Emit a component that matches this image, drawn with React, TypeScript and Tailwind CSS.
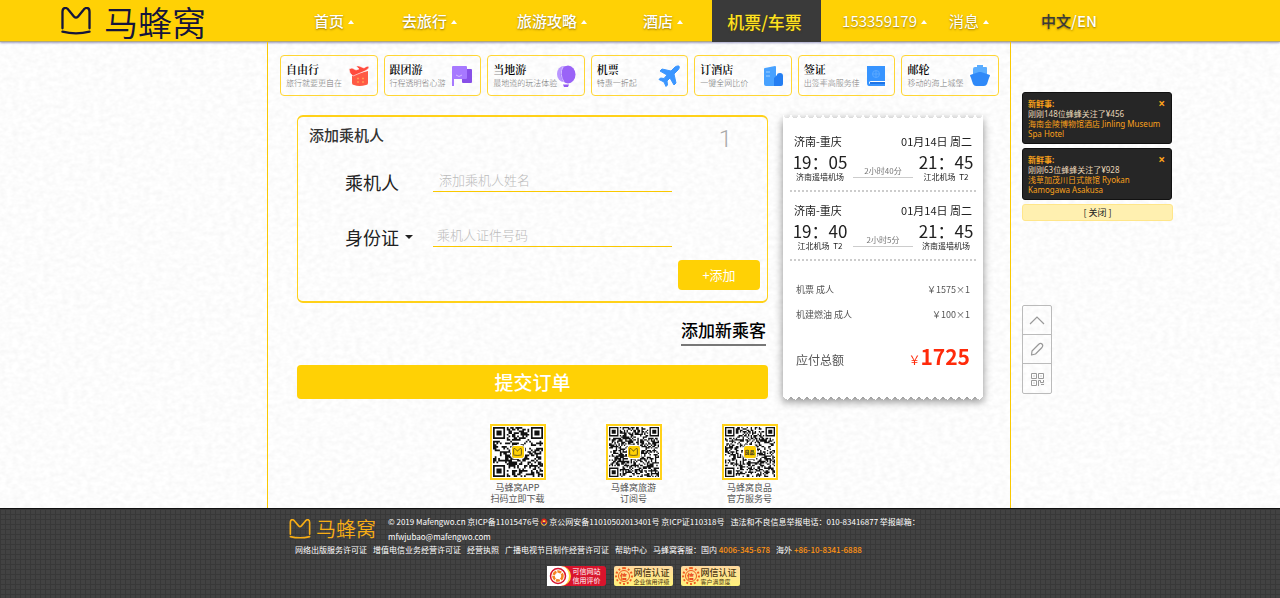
import { useState } from "react";
import type { ReactNode } from "react";

const NAV = [
  { label: "首页", className: "ml-[108px]" },
  { label: "去旅行", className: "ml-12" },
  { label: "旅游攻略", className: "ml-[60px]" },
  { label: "酒店", className: "ml-14" },
];

const CATEGORIES: { title: string; note: string; icon: ReactNode }[] = [
  { title: "自由行", note: "旅行就要更自在", icon: <TripIcon /> },
  { title: "跟团游", note: "行程透明省心游", icon: <FlagIcon /> },
  { title: "当地游", note: "最地道的玩法体验", icon: <BalloonIcon /> },
  { title: "机票", note: "特惠一折起", icon: <PlaneIcon /> },
  { title: "订酒店", note: "一键全网比价", icon: <HotelIcon /> },
  { title: "签证", note: "出签率高服务佳", icon: <VisaIcon /> },
  { title: "邮轮", note: "移动的海上城堡", icon: <ShipIcon /> },
];

const NEWS = [
  { id: 1, text: "刚刚148位蜂蜂关注了¥456", hotel: "海南金陵博物馆酒店 Jinling Museum Spa Hotel" },
  { id: 2, text: "刚刚63位蜂蜂关注了¥928", hotel: "浅草加茂川日式旅馆 Ryokan Kamogawa Asakusa" },
];

const QR_CODES = [
  { lines: ["马蜂窝APP", "扫码立即下载"], size: 29, seed: 7 },
  { lines: ["马蜂窝旅游", "订阅号"], size: 37, seed: 23 },
  { lines: ["马蜂窝良品", "官方服务号"], size: 37, seed: 91, mark: "良品" },
];

const LICENCES = ["网络出版服务许可证", "增值电信业务经营许可证", "经营执照", "广播电视节目制作经营许可证", "帮助中心"];

export default function App() {
  return (
    <div className="relative isolate flex min-h-screen flex-col bg-[#fbfbfb] font-['Noto_Sans_CJK_SC','Noto_Sans',sans-serif] text-[#222]">
      <PaperTexture />
      <Header />
      <main className="grid flex-1 grid-cols-[1fr_744px_1fr] pr-0.5">
        <div className="col-start-2 border-x border-[#fac800] pt-[13px] pr-[11px] pb-0.5 pl-3">
          <Categories />
          <div className="mt-[19px] flex items-start gap-[15px] pr-4 pl-[17px]">
            <PassengerForm />
            <Ticket />
          </div>
          <div className="mt-6 flex justify-center gap-15 pr-3">
            {QR_CODES.map((code) => (
              <figure key={code.seed} className="w-14">
                <QrCode size={code.size} seed={code.seed} mark={code.mark} />
                <figcaption className="mt-0.5 flex flex-col items-center text-[9px] leading-[11px] whitespace-nowrap text-[#555]">
                  {code.lines.map((line) => (
                    <span key={line}>{line}</span>
                  ))}
                </figcaption>
              </figure>
            ))}
          </div>
        </div>
        <Sidebar />
      </main>
      <Footer />
    </div>
  );
}

function PaperTexture() {
  return (
    <svg className="absolute inset-0 -z-10 size-full" aria-hidden="true">
      <filter id="paper" x="0" y="0" width="100%" height="100%">
        <feTurbulence type="fractalNoise" baseFrequency="0.16 0.22" numOctaves="2" seed="4" />
        <feColorMatrix values="0.13 0 0 0 0.91 0.13 0 0 0 0.91 0.13 0 0 0 0.91 0 0 0 0 1" />
      </filter>
      <rect width="100%" height="100%" filter="url(#paper)" />
    </svg>
  );
}

function CatMark({ className }: { className: string }) {
  return (
    <svg viewBox="0 0 32 29" className={className} fill="none" stroke="currentColor" strokeWidth="2.4" strokeLinecap="round" aria-hidden="true">
      <path d="M2 22V5Q2 1 5 1 7 1 9 4L14 10Q16 12 18 10L23 4Q25 1 27 1 30 1 30 5V22" />
      <path d="M2 25.500Q16 29 30 25.500" />
    </svg>
  );
}

function Caret() {
  return (
    <svg viewBox="0 0 6 4" className="h-1 w-1.5 fill-white" aria-hidden="true">
      <path d="M3 0 6 4H0Z" />
    </svg>
  );
}

function Header() {
  return (
    <header className="flex h-[42px] items-center border-b border-[#b4a970] bg-[#ffd105] whitespace-nowrap shadow-[0_1px_2px_rgba(60,60,140,0.5)]">
      <a href="#" aria-label="马蜂窝" className="ml-15 flex items-center gap-3 text-[#14143c]">
        <CatMark className="h-7 w-8" />
        <span className="pt-0.5 text-[34px] leading-10 font-[350]">马蜂窝</span>
      </a>
      <nav className="flex items-center text-[15px] font-medium text-white [text-shadow:0_1px_2px_rgba(80,60,0,0.6)]">
        {NAV.map((item) => (
          <a key={item.label} href="#" className={"flex items-center gap-1 pt-0.5 " + item.className}>
            {item.label}
            <Caret />
          </a>
        ))}
        <a href="#" className="ml-[29px] flex h-[42px] w-[109px] items-center justify-center bg-[#3a3a3a] pt-0.5 pr-1 text-[17px] text-[#ffe21f]">
          机票/车票
        </a>
        <a href="#" className="ml-[21px] flex items-center gap-1 pt-0.5 font-normal">
          153359179
          <Caret />
        </a>
        <a href="#" className="ml-[22px] flex items-center gap-1 pt-0.5 font-normal">
          消息
          <Caret />
        </a>
        <a href="#" className="ml-[52px] pt-0.5">
          <span className="text-[#3a3a3a]">中文</span>/EN
        </a>
      </nav>
    </header>
  );
}

function Categories() {
  return (
    <nav className="grid grid-cols-7 gap-1.5">
      {CATEGORIES.map((item) => (
        <a
          key={item.title}
          href="#"
          className="flex h-[41px] items-center justify-between rounded border border-[#ffd633] pr-[7px] pl-[5px] whitespace-nowrap"
        >
          <span className="flex w-0 flex-1 flex-col">
            <span className="font-['Noto_Serif_CJK_SC','Noto_Sans_CJK_SC',serif] text-[11px] leading-[14px] font-semibold text-black">{item.title}</span>
            <span className="text-[8px] leading-[14px] font-light text-[#777]">{item.note}</span>
          </span>
          {item.icon}
        </a>
      ))}
    </nav>
  );
}

function PassengerForm() {
  return (
    <form className="min-w-0 flex-1" onSubmit={(e) => e.preventDefault()}>
      <fieldset className="h-[188px] rounded-md border-2 border-x border-[#ffd119] pr-[7px] pl-[11px]">
        <div className="flex h-[55px] items-start justify-between pt-1.5 pr-7">
          <h2 className="text-[15px] leading-6 font-medium text-[#333]">添加乘机人</h2>
          <span className="font-['Roboto',sans-serif] text-2xl leading-8 font-light text-[#aaa]">1</span>
        </div>
        <div className="flex items-center pl-9">
          <label htmlFor="name" className="w-[88px] text-lg leading-5">
            乘机人
          </label>
          <input
            id="name"
            placeholder="添加乘机人姓名"
            className="h-5 w-[239px] border-b border-[#fac800] bg-transparent px-1.5 pb-1 text-[13px] leading-4 outline-none placeholder:font-light placeholder:text-[#bbb]"
          />
        </div>
        <div className="mt-[35px] flex items-center pl-9">
          <div className="flex w-[88px] items-center">
            <select aria-label="证件类型" className="w-[60px] appearance-none bg-transparent text-lg leading-5 outline-none">
              <option>身份证</option>
              <option>护照</option>
            </select>
            <svg viewBox="0 0 8 4" className="h-1 w-2 fill-[#222]" aria-hidden="true">
              <path d="M0 0H8L4 4Z" />
            </svg>
          </div>
          <input
            aria-label="证件号码"
            placeholder="乘机人证件号码"
            className="h-5 w-[239px] border-b border-[#fac800] bg-transparent px-1 pb-1 text-[13px] leading-4 outline-none placeholder:font-light placeholder:text-[#bbb]"
          />
        </div>
        <div className="mt-[13px] flex justify-end">
          <button type="button" className="h-[30px] w-[82px] rounded bg-[#ffd105] text-[13px] text-white">
            +添加
          </button>
        </div>
      </fieldset>
      <div className="mt-[13px] flex justify-end pr-0.5">
        <a href="#" className="border-b-2 border-[#777] text-[17px] leading-7 font-medium text-black">
          添加新乘客
        </a>
      </div>
      <button type="submit" className="mt-[19px] h-[34px] w-full rounded bg-[#ffd105] text-[19px] font-medium text-white">
        提交订单
      </button>
    </form>
  );
}

interface FlightProps {
  depart: string;
  from: string;
  arrive: string;
  to: string;
  duration: string;
}

function Flight({ depart, from, arrive, to, duration }: FlightProps) {
  return (
    <section className="border-b-2 border-dotted border-[#ccc] pb-2">
      <div className="flex justify-between px-1 text-[11px] leading-5">
        <h3>济南-重庆</h3>
        <span>01月14日 周二</span>
      </div>
      <div className="flex items-end justify-between px-0.5 pt-px text-center">
        <div className="w-14">
          <p className="text-[17px] leading-5 whitespace-nowrap">{depart}</p>
          <p className="text-[8px] leading-[10px] whitespace-pre">{from}</p>
        </div>
        <p className="mb-1 w-15 border-b border-[#ccc] text-[8px] leading-3 text-[#777]">{duration}</p>
        <div className="w-14">
          <p className="text-[17px] leading-5 whitespace-nowrap">{arrive}</p>
          <p className="text-[8px] leading-[10px] whitespace-pre">{to}</p>
        </div>
      </div>
    </section>
  );
}

function Ticket() {
  return (
    <aside className="w-[200px] shrink-0 drop-shadow-[0_3px_4px_rgba(0,0,0,0.45)]">
      <div className="h-1 bg-[radial-gradient(circle_at_4px_0,transparent_3px,white_3px)] bg-size-[8px_4px]" />
      <div className="bg-white px-[7px] pt-3">
        <Flight depart="19：05" from="济南遥墙机场" arrive="21：45" to="江北机场  T2" duration="2小时40分" />
        <div className="pt-2">
          <Flight depart="19：40" from="江北机场  T2" arrive="21：45" to="济南遥墙机场" duration="2小时5分" />
        </div>
        <dl className="flex flex-col gap-[9px] px-1.5 pt-[21px] pb-5 text-[#555]">
          <div className="flex justify-between text-[9px] leading-4">
            <dt>机票 成人</dt>
            <dd>￥1575×1</dd>
          </div>
          <div className="flex justify-between text-[9px] leading-4">
            <dt>机建燃油 成人</dt>
            <dd>￥100×1</dd>
          </div>
          <div className="mt-2 flex items-baseline justify-between text-xs leading-8">
            <dt>应付总额</dt>
            <dd className="text-[#ff2a0a]">
              ￥<strong className="text-[21px] font-bold">1725</strong>
            </dd>
          </div>
        </dl>
      </div>
      <div className="h-1 bg-[conic-gradient(from_135deg_at_50%_0%,transparent_90deg,white_0)] bg-size-[8px_4px] bg-position-[4px_0]" />
    </aside>
  );
}

function Sidebar() {
  const [news, setNews] = useState(NEWS);

  return (
    <aside className="ml-[11px] w-[151px] pt-[50px]">
      <div className="flex flex-col gap-1">
        {news.map((item) => (
          <article
            key={item.id}
            className="h-[52px] w-[150px] rounded-[3px] border border-[#111] bg-[#262626] px-[5px] pt-1.5 font-['Noto_Sans','Noto_Sans_CJK_SC',sans-serif] text-[8px] leading-[10px] text-[#e6d5b8]"
          >
            <div className="flex justify-between font-bold text-[#f9a11b]">
              <h3>新鲜事:</h3>
              <button aria-label="移除" className="px-px text-xs leading-[10px]" onClick={() => setNews(news.filter((n) => n.id !== item.id))}>
                ×
              </button>
            </div>
            <p>{item.text}</p>
            <a href="#" className="block text-[#f9a11b]">
              {item.hotel}
            </a>
          </article>
        ))}
        <button className="h-[17px] rounded-[3px] border border-[#ffe68a] bg-[#fff0b0] text-[9px] leading-3" onClick={() => setNews([])}>
          [ 关闭 ]
        </button>
      </div>
      <div className="mt-21 flex w-[30px] flex-col divide-y divide-[#bbb] rounded-xs border border-[#bbb] text-[#999]">
        <button aria-label="返回顶部" className="flex h-[29px] items-center justify-center">
          <svg viewBox="0 0 16 16" className="size-4" fill="none" stroke="currentColor" strokeWidth="1.2">
            <path d="m1 12 7-7 7 7" />
          </svg>
        </button>
        <button aria-label="反馈" className="flex h-[29px] items-center justify-center">
          <svg viewBox="0 0 16 16" className="size-4" fill="none" stroke="currentColor" strokeWidth="1.2" strokeLinejoin="round">
            <path d="M3 10 9.500 3.500Q11.500 1.500 13 3T13 6.500L6.500 13 2.500 14Z" />
          </svg>
        </button>
        <button aria-label="二维码" className="flex h-[29px] items-center justify-center">
          <svg viewBox="0 0 16 16" className="size-4" fill="none" stroke="currentColor">
            <path d="M2.500 2.500h5v5h-5zM9.500 2.500h5v5h-5zM2.500 9.500h5v5h-5zM4.500 5h1M11.500 5h1M4.500 12h1M9.500 15V9.500h2v2h3V9M12 13.500h3" />
          </svg>
        </button>
      </div>
    </aside>
  );
}

// finder squares in three corners, a pseudo random field elsewhere
function qrPath(size: number, seed: number) {
  let state = seed;
  let d = "";
  for (let y = 0; y < size; y++) {
    for (let x = 0; x < size; x++) {
      state = (state * 1103515245 + 12345) % 2147483648;
      const left = x < 8;
      const right = x >= size - 8;
      const top = y < 8;
      const bottom = y >= size - 8;
      let dark = state / 2147483648 < 0.5;
      if ((left && (top || bottom)) || (right && top)) {
        const fx = Math.abs((left ? x : x - size + 7) - 3);
        const fy = Math.abs((top ? y : y - size + 7) - 3);
        const ring = Math.max(fx, fy);
        dark = ring === 3 || ring < 2;
      }
      if (dark) d += "M" + x + " " + y + "h1v1h-1z";
    }
  }
  return d;
}

function QrCode({ size, seed, mark }: { size: number; seed: number; mark?: string }) {
  return (
    <div className="relative size-14 border-2 border-[#ffd119] bg-white p-px">
      <svg viewBox={"0 0 " + size + " " + size} className="size-full fill-[#111]" aria-hidden="true">
        <path d={qrPath(size, seed)} />
      </svg>
      <span className="absolute inset-0 m-auto flex size-3 items-center justify-center rounded-xs bg-[#ffd105] text-[5px] font-bold text-[#222] outline outline-white">
        {mark ?? <CatMark className="h-2 w-[9px]" />}
      </span>
    </div>
  );
}

function Footer() {
  return (
    <footer className="flex flex-col items-center border-t border-[#111] bg-[#424242] bg-[linear-gradient(#383838_1px,transparent_1px),linear-gradient(90deg,#383838_1px,transparent_1px)] bg-size-[5px_5px] pt-[5px] pb-3 text-[8px] leading-[15px] whitespace-nowrap text-white">
      <div className="w-[704px]">
        <div className="flex gap-3">
          <a href="#" aria-label="马蜂窝" className="flex items-center gap-1 text-[#f7ad15]">
            <CatMark className="h-5 w-6" />
            <span className="text-xl leading-[30px] font-[350]">马蜂窝</span>
          </a>
          <div>
            <p className="flex items-center">
              © 2019 Mafengwo.cn 京ICP备11015476号
              <PoliceBadge />
              京公网安备11010502013401号 京ICP证110318号
              <span className="ml-1.5">违法和不良信息举报电话：010-83416877 举报邮箱：</span>
            </p>
            <a href="mailto:mfwjubao@mafengwo.com">mfwjubao@mafengwo.com</a>
          </div>
        </div>
        <div className="flex gap-1.5 pl-[7px] leading-3">
          {LICENCES.map((name) => (
            <a key={name} href="#">
              {name}
            </a>
          ))}
          <span>
            马蜂窝客服：国内 <b className="font-medium text-[#ff9213]">4006-345-678</b>
          </span>
          <span>
            海外 <b className="font-medium text-[#ff9213]">+86-10-8341-6888</b>
          </span>
        </div>
      </div>
      <div className="mt-[9px] flex gap-2 pt-px pl-1.5">
        <a href="#" className="flex h-5 w-[59px] items-center rounded-[3px] bg-[#d9142c]">
          <span className="flex h-5 w-6 items-center justify-center rounded-l-[3px] rounded-r-full border-r-2 border-[#ffd940] bg-white">
            <svg viewBox="0 0 18 18" className="size-[18px]" fill="none" aria-hidden="true">
              <circle cx="9" cy="9" r="7.500" stroke="#d9142c" strokeWidth="1.500" />
              <circle cx="9" cy="9" r="4.500" stroke="#f58220" strokeWidth="2.600" strokeDasharray="4 1" />
            </svg>
          </span>
          <span className="flex flex-col pl-0.5 text-[7px] leading-[9px]">
            <span>可信网站</span>
            <span>信用评价</span>
          </span>
        </a>
        <TrustBadge note="企业信用评级" />
        <TrustBadge note="客户满意度" />
      </div>
    </footer>
  );
}

function TrustBadge({ note }: { note: string }) {
  return (
    <a href="#" className="flex h-5 w-[59px] items-center gap-px rounded-xs bg-[linear-gradient(#ffd9a0,#fff27a)] pl-px text-[#4a3510]">
      <span className="flex size-[18px] shrink-0 items-center justify-center rounded-full border-2 border-dotted border-[#f05a1e]">
        <span className="flex size-3 items-center justify-center rounded-full border border-[#f05a1e] text-[7px] leading-none font-bold text-[#e8380d]">信</span>
      </span>
      <span className="flex flex-col">
        <span className="text-[9px] leading-[11px] font-medium">网信认证</span>
        <span className="text-[6px] leading-[7px]">{note}</span>
      </span>
    </a>
  );
}

function PoliceBadge() {
  return (
    <svg viewBox="0 0 10 10" className="mx-px size-2" aria-hidden="true">
      <path d="M1 4Q0 8 5 10 10 8 9 4Z" fill="#e8b23a" />
      <circle cx="5" cy="4" r="3.500" fill="#d8261c" />
      <path d="M2.500 6h5L5 9Z" fill="#2b3a8c" />
      <path d="M3.500 3h3v2h-3z" fill="#ffd940" />
    </svg>
  );
}

function TripIcon() {
  return (
    <svg viewBox="0 0 22 22" className="size-[22px]" aria-hidden="true">
      <path d="M4 10 20 6V18Q20 20 18 20 11 22 6 20 4 20 4 18Z" fill="#ff5a45" />
      <path d="M1 4 4 3 8 5 11 4 8 1 11 1 16 3Q20 0 21 2 21 4 17 6L5 11 2 8Z" fill="#ff4a3c" stroke="#fbfbfb" strokeWidth=".6" />
      <path d="M9 13.500h2M14 13.500h2M9 17h2M14 17h2" stroke="#ff9a55" strokeWidth="1.500" fill="none" />
    </svg>
  );
}

function FlagIcon() {
  return (
    <svg viewBox="0 0 22 22" className="size-[22px]" aria-hidden="true">
      <path d="M11 4h9q1 0 1 1v12q0 1-1 1h-8q-1 0-1-1Z" fill="#8850e8" />
      <path d="M1 2q0-1 1-1h13q1 0 1 1v11q0 1-1 1H3v7H1Z" fill="#a779ff" />
      <path d="M5 10q3 3 6 0" stroke="#d5baff" fill="none" />
    </svg>
  );
}

function BalloonIcon() {
  return (
    <svg viewBox="0 0 22 22" className="size-[22px]" aria-hidden="true">
      <ellipse cx="9" cy="9" rx="7" ry="8" fill="#b995ff" />
      <ellipse cx="13" cy="9.500" rx="7.500" ry="9" fill="#9a63f7" />
      <path d="M8 1.500q-4 8 1 15.500" stroke="#d5c0ff" fill="none" />
      <path d="M8 19.500h6l-1 2.500H9Z" fill="#935bf2" />
    </svg>
  );
}

function PlaneIcon() {
  return (
    <svg viewBox="0 0 22 22" className="size-[22px]" aria-hidden="true">
      <path
        d="M13 6 17 2Q19 .5 21 1 22 3 20 5L16 9 18 18 16 20 12 13 9 16 9.500 20 8 21.500 6 17 1 14.500 2.500 13 6 13.500 9 10 2 6 4 4Z"
        fill="#3b96ff"
        stroke="#3b96ff"
        strokeLinejoin="round"
      />
    </svg>
  );
}

function HotelIcon() {
  return (
    <svg viewBox="0 0 22 22" className="size-[22px]" aria-hidden="true">
      <path d="M2 4q0-1 1-1L13 1q1 0 1 1v19H4q-2 0-2-2Z" fill="#48a2ff" />
      <path d="M15 10q0-2 3-2 3 0 3 3v8q0 2-2 2h-7v-8Z" fill="#247ef2" />
      <path d="M4 7h4M4 11h4" stroke="#a0d0ff" />
    </svg>
  );
}

function VisaIcon() {
  return (
    <svg viewBox="0 0 22 22" className="size-[22px]" aria-hidden="true">
      <path d="M2 1h18v15H6q-2 0-2 2 0 1 2 1h14v2H4q-2 0-2-3Z" fill="#3794ff" />
      <path d="M5 17h15v2H5z" fill="#1e74e6" />
      <circle cx="11" cy="9" r="3.500" fill="none" stroke="#5aa8ff" />
      <path d="M7.500 9h7M11 5.500v7" stroke="#5aa8ff" />
    </svg>
  );
}

function ShipIcon() {
  return (
    <svg viewBox="0 0 22 22" className="size-[22px]" aria-hidden="true">
      <path d="M8 0h6v2h3q1 0 1 1v7H4V4q0-2 2-2h2Z" fill="#5aadff" />
      <path d="M1 10 10 7h2l9 3q0 1-1 3l-2 6q-1 2-3 2H7q-2 0-3-2l-2-6q-1-2-1-3Z" fill="#2f89f8" />
    </svg>
  );
}
